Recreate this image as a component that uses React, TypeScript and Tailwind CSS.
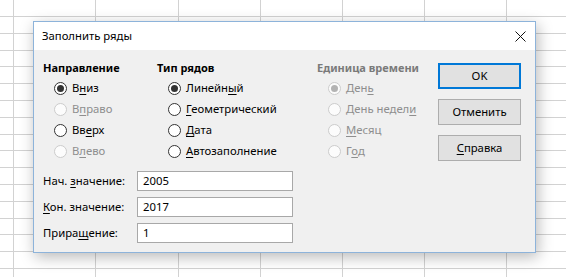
import React from 'react'

const FONT = '"Noto Sans", "Open Sans", sans-serif'

const V_LINES = [13, 95, 178, 260, 342, 424, 506]
const H_LINES = Array.from({ length: 16 }, (_, k) => Math.round(16 + k * 16.8))

// label with one underlined mnemonic letter
function Mn({ text, at }: { text: string; at: number }) {
  if (at < 0) return <>{text}</>
  return (
    <>
      {text.slice(0, at)}
      <span className="underline underline-offset-2">{text[at]}</span>
      {text.slice(at + 1)}
    </>
  )
}

function Radio({ label, at, checked = false, disabled = false }: { label: string; at: number; checked?: boolean; disabled?: boolean }) {
  return (
    <div className="flex h-[21px] items-center pl-[11px]">
      <span
        className={`flex h-[13px] w-[13px] shrink-0 items-center justify-center rounded-full border ${
          disabled ? 'border-[#cccccc] bg-[#fcfcfc]' : 'border-[#333333] bg-white'
        }`}
      >
        {checked && <span className={`h-[7px] w-[7px] rounded-full ${disabled ? 'bg-[#b3b3b3]' : 'bg-[#333333]'}`} />}
      </span>
      <span className={`ml-[5px] ${disabled ? 'text-[#8e8e8e]' : 'text-black'}`}>
        <Mn text={label} at={at} />
      </span>
    </div>
  )
}

function Field({ label, at, value }: { label: string; at: number; value: string }) {
  return (
    <div className="flex h-[20px] items-center">
      <div className="w-[94px]">
        <Mn text={label} at={at} />
      </div>
      <div className="flex h-[20px] w-[156px] items-center border border-[#a8a8a8] bg-white pl-[5px]">{value}</div>
    </div>
  )
}

export default function App() {
  return (
    <div className="relative h-[277px] w-[566px] overflow-hidden bg-white text-[11.3px] text-black" style={{ fontFamily: FONT }}>
      {/* spreadsheet behind the dialog */}
      <svg className="absolute inset-0" width={566} height={277}>
        {V_LINES.map((x) => (
          <line key={'v' + x} x1={x + 0.5} y1={0} x2={x + 0.5} y2={277} stroke="#d2d2d2" strokeWidth={1} />
        ))}
        {H_LINES.map((y) => (
          <line key={'h' + y} x1={0} y1={y + 0.5} x2={566} y2={y + 0.5} stroke="#d2d2d2" strokeWidth={1} />
        ))}
      </svg>

      {/* dialog */}
      <div className="absolute left-[33px] top-[21px] flex h-[232px] w-[503px] flex-col border border-[#8db3da] bg-[#f0f0f0] shadow-[2px_4px_14px_rgba(0,0,0,0.28)]">
        <div className="flex h-[28px] shrink-0 items-center justify-between bg-white pl-[8px] pr-[9px]">
          <span>Заполнить ряды</span>
          <svg width="11" height="11" viewBox="0 0 11 11">
            <path d="M0.5 0.5 L10.5 10.5 M10.5 0.5 L0.5 10.5" stroke="#111" strokeWidth="1" fill="none" />
          </svg>
        </div>

        <div className="flex flex-1 flex-col pl-[9px] pr-[13px] pt-[9px]">
          <div className="flex">
            <div className="w-[114px]">
              <div className="h-[17px] text-[11px] font-bold leading-[17px]">Направление</div>
              <div className="mt-[2px]">
                <Radio label="Вниз" at={1} checked />
                <Radio label="Вправо" at={1} disabled />
                <Radio label="Вверх" at={2} />
                <Radio label="Влево" at={1} disabled />
              </div>
            </div>

            <div className="w-[160px]">
              <div className="h-[17px] text-[11px] font-bold leading-[17px]">Тип рядов</div>
              <div className="mt-[2px]">
                <Radio label="Линейный" at={6} checked />
                <Radio label="Геометрический" at={0} />
                <Radio label="Дата" at={0} />
                <Radio label="Автозаполнение" at={0} />
              </div>
            </div>

            <div className="w-[121px]">
              <div className="h-[17px] text-[11px] font-bold leading-[17px] text-[#7a7a7a]">Единица времени</div>
              <div className="mt-[2px]">
                <Radio label="День" at={3} checked disabled />
                <Radio label="День недели" at={10} disabled />
                <Radio label="Месяц" at={0} disabled />
                <Radio label="Год" at={1} disabled />
              </div>
            </div>

            <div className="mt-[4px] flex w-[83px] flex-col gap-[10px]">
              <button className="h-[26px] border-2 border-[#0078d7] bg-[#e1e1e1]">OK</button>
              <button className="h-[26px] border border-[#adadad] bg-[#e1e1e1]">Отменить</button>
              <button className="h-[26px] border border-[#adadad] bg-[#e1e1e1]">
                <Mn text="Справка" at={0} />
              </button>
            </div>
          </div>

          <div className="mt-[9px] flex flex-col gap-[6px]">
            <Field label="Нач. значение:" at={5} value="2005" />
            <Field label="Кон. значение:" at={0} value="2017" />
            <Field label="Приращение:" at={5} value="1" />
          </div>
        </div>
      </div>
    </div>
  )
}
